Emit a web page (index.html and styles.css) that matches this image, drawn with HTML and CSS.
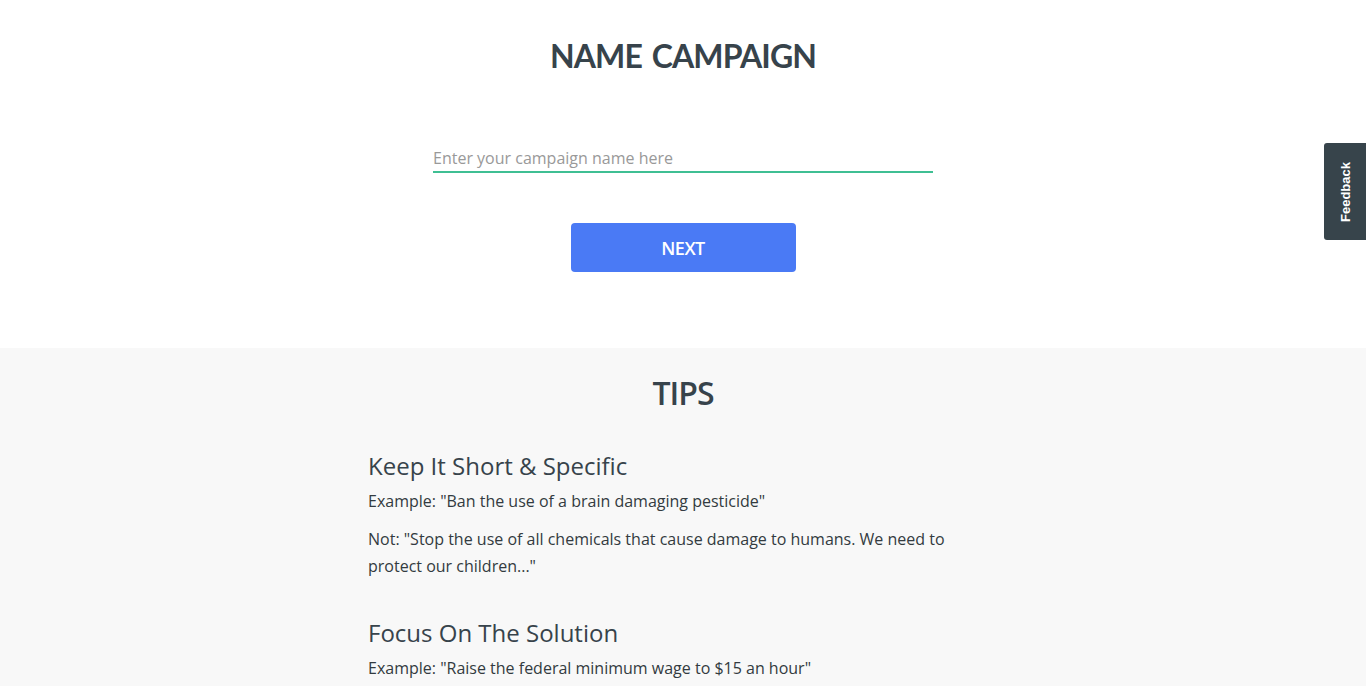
FILE: index.html
```html
<!DOCTYPE html>
<html lang="en">
<head>
<meta charset="utf-8">
<title>Name Campaign</title>
<link rel="stylesheet" href="styles.css">
</head>
<body>
<section class="name-section">
  <h1 class="title">NAME CAMPAIGN</h1>
  <form class="name-form">
    <input class="name-input" type="text" placeholder="Enter your campaign name here">
    <button class="next-btn" type="button">NEXT</button>
  </form>
</section>
<section class="tips-section">
  <h2 class="tips-title">TIPS</h2>
  <div class="tips">
    <div class="tip">
      <h3 class="tip-title">Keep It Short &amp; Specific</h3>
      <p class="tip-text">Example: "Ban the use of a brain damaging pesticide"</p>
      <p class="tip-text">Not: "Stop the use of all chemicals that cause damage to humans. We need to protect our children..."</p>
    </div>
    <div class="tip">
      <h3 class="tip-title">Focus On The Solution</h3>
      <p class="tip-text">Example: "Raise the federal minimum wage to $15 an hour"</p>
    </div>
  </div>
</section>
<div class="feedback-tab"><span class="feedback-label">Feedback</span></div>
</body>
</html>
```
FILE: styles.css
```css
html, body {
  margin: 0;
  padding: 0;
}
body {
  font-family: "Open Sans", "Liberation Sans", sans-serif;
  color: #37434b;
  background: #f8f8f8;
  overflow: hidden;
}
.name-section {
  background: #ffffff;
  height: 348px;
  padding-top: 36px;
  box-sizing: border-box;
  display: flex;
  flex-direction: column;
  align-items: center;
}
.title {
  margin: 0;
  font-family: "Lato", "Open Sans", sans-serif;
  font-weight: 700;
  font-size: 32px;
  line-height: 40px;
  letter-spacing: -0.9px;
  word-spacing: 3px;
  color: #37434b;
}
.name-form {
  display: flex;
  flex-direction: column;
  align-items: center;
  margin-top: 71px;
}
.name-input {
  width: 500px;
  box-sizing: border-box;
  border: none;
  border-bottom: 2px solid #3fbf93;
  outline: none;
  background: transparent;
  padding: 0 0 2px 0;
  height: 26px;
  font-family: "Open Sans", sans-serif;
  font-size: 16px;
  color: #37434b;
}
.name-input::placeholder {
  color: #999999;
}
.next-btn {
  margin-top: 50px;
  width: 225px;
  height: 49px;
  border: none;
  border-radius: 4px;
  background: #4a7af5;
  color: #ffffff;
  font-family: "Open Sans", sans-serif;
  font-weight: 600;
  font-size: 18px;
  letter-spacing: -0.5px;
}
.tips-section {
  padding-top: 25px;
  display: flex;
  flex-direction: column;
  align-items: center;
}
.tips-title {
  margin: 0;
  font-size: 32px;
  font-weight: 600;
  line-height: 40px;
  letter-spacing: -1px;
  color: #37434b;
}
.tips {
  width: 630px;
  margin-top: 37px;
  display: flex;
  flex-direction: column;
  gap: 37px;
}
.tip-title {
  margin: 0 0 6px 0;
  font-size: 24px;
  font-weight: 400;
  line-height: 32px;
  color: #37434b;
}
.tip-text {
  margin: 0 0 11px 0;
  font-size: 16px;
  line-height: 27px;
  color: #333b40;
}
.tip-text:last-child {
  margin-bottom: 0;
}
.feedback-tab {
  position: fixed;
  right: 0;
  top: 143px;
  width: 42px;
  height: 97px;
  background: #37444b;
  border-radius: 3px 0 0 3px;
  display: flex;
  align-items: center;
  justify-content: center;
}
.feedback-label {
  writing-mode: vertical-rl;
  transform: rotate(180deg);
  font-family: "Liberation Sans", Arial, sans-serif;
  font-weight: 700;
  font-size: 13px;
  color: #ffffff;
}
```
